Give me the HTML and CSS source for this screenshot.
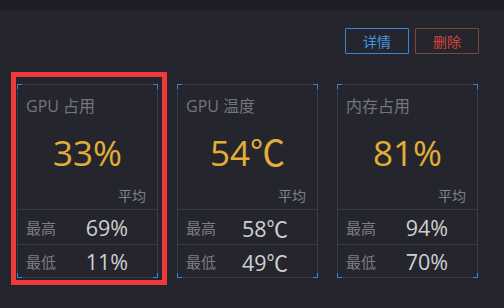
FILE: index.html
```html
<!DOCTYPE html>
<html lang="zh-CN">
<head>
<meta charset="utf-8">
<link rel="stylesheet" href="styles.css">
</head>
<body>
<div class="topbar"></div>
<div class="page">
  <div class="toolbar">
    <button class="btn btn-info">详情</button>
    <button class="btn btn-danger">删除</button>
  </div>
  <div class="cards">
    <div class="card">
      <span class="corner tl"></span><span class="corner tr"></span><span class="corner bl"></span><span class="corner br"></span>
      <div class="title">GPU 占用</div>
      <div class="value">33%</div>
      <div class="avg">平均</div>
      <div class="row"><span class="label">最高</span><span class="num">69%</span></div>
      <div class="row"><span class="label">最低</span><span class="num">11%</span></div>
      <div class="highlight"></div>
    </div>
    <div class="card">
      <span class="corner tl"></span><span class="corner tr"></span><span class="corner bl"></span><span class="corner br"></span>
      <div class="title">GPU 温度</div>
      <div class="value">54℃</div>
      <div class="avg">平均</div>
      <div class="row"><span class="label">最高</span><span class="num">58℃</span></div>
      <div class="row"><span class="label">最低</span><span class="num">49℃</span></div>
    </div>
    <div class="card">
      <span class="corner tl"></span><span class="corner tr"></span><span class="corner bl"></span><span class="corner br"></span>
      <div class="title">内存占用</div>
      <div class="value">81%</div>
      <div class="avg">平均</div>
      <div class="row"><span class="label">最高</span><span class="num">94%</span></div>
      <div class="row"><span class="label">最低</span><span class="num">70%</span></div>
    </div>
  </div>
</div>
</body>
</html>
```
FILE: styles.css
```css
* { box-sizing: border-box; }
html, body {
  margin: 0;
  padding: 0;
  background: #25262d;
  width: 504px;
  height: 308px;
  overflow: hidden;
  font-family: "Open Sans", "Noto Sans CJK SC", sans-serif;
}
.topbar {
  height: 10px;
  background: #1e1f24;
}
.page {
  padding: 18px 25px 0 17px;
}
.toolbar {
  display: flex;
  justify-content: flex-end;
  gap: 6px;
  height: 26px;
}
.btn {
  width: 64px;
  height: 26px;
  background: transparent;
  font-family: "Noto Sans CJK SC", sans-serif;
  font-size: 14px;
  padding: 0;
  border-radius: 1px;
}
.btn-info {
  border: 1px solid #3a86d4;
  color: #4495e2;
}
.btn-danger {
  border: 1px solid #7d4440;
  color: #d2443c;
}
.cards {
  margin-top: 30px;
  display: flex;
  gap: 19px;
}
.card {
  position: relative;
  width: 141px;
  height: 194px;
  border: 1px solid #3a3b45;
  display: flex;
  flex-direction: column;
}
.corner {
  position: absolute;
  width: 5px;
  height: 5px;
  border-color: #3d80cc;
  border-style: solid;
  border-width: 0;
}
.corner.tl { top: -1px; left: -1px; border-top-width: 1.5px; border-left-width: 1.5px; }
.corner.tr { top: -1px; right: -1px; border-top-width: 1.5px; border-right-width: 1.5px; }
.corner.bl { bottom: -1px; left: -1px; border-bottom-width: 1.5px; border-left-width: 1.5px; }
.corner.br { bottom: -1px; right: -1px; border-bottom-width: 1.5px; border-right-width: 1.5px; }
.title {
  padding: 11px 0 0 8px;
  height: 31px;
  line-height: 20px;
  font-size: 16px;
  color: #74757e;
}
.value {
  margin-top: 15px;
  height: 44px;
  line-height: 44px;
  text-align: center;
  font-size: 35px;
  color: #e3ad36;
}
.avg {
  margin-top: 11px;
  height: 18px;
  line-height: 18px;
  text-align: right;
  padding-right: 11px;
  font-size: 14px;
  color: #7f8089;
  font-family: "Noto Sans CJK SC", sans-serif;
}
.row {
  margin-top: 5px;
  height: 35px;
  border-top: 1px solid #3c3d47;
  display: flex;
  align-items: center;
  justify-content: space-between;
  padding: 0 29px 0 8px;
}
.row + .row {
  margin-top: 0;
  flex: 1;
}
.label {
  font-family: "Noto Sans CJK SC", sans-serif;
  font-size: 15px;
  color: #7c7d86;
}
.num {
  font-size: 21.5px;
  color: #cfcfd3;
}
.highlight {
  position: absolute;
  left: -7px;
  top: -13px;
  width: 156px;
  height: 213px;
  border: 5px solid #ee3a3a;
  pointer-events: none;
}
```
